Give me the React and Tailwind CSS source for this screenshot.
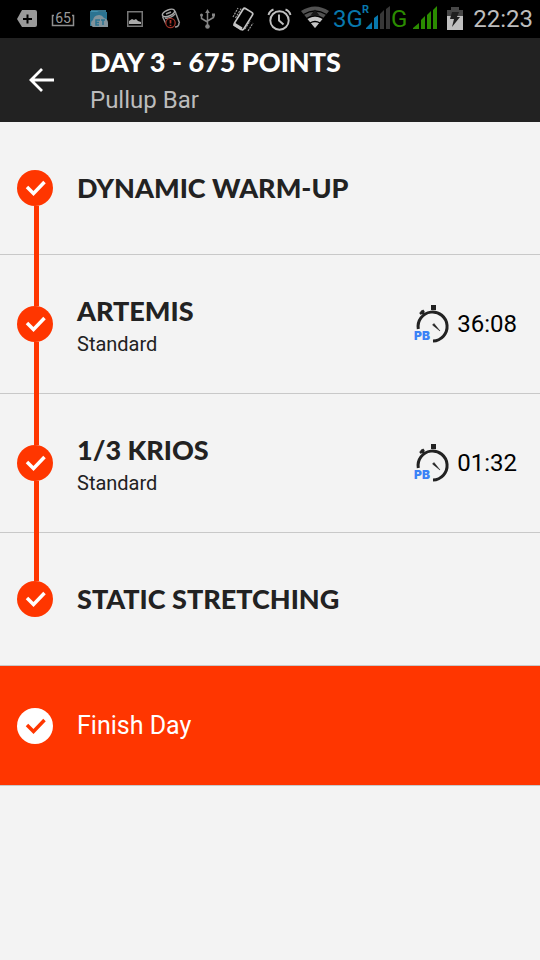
import React from 'react';

const workouts = [
    { title: 'Dynamic Warm-up' },
    { title: 'Artemis', variant: 'Standard', time: '36:08' },
    { title: '1/3 Krios', variant: 'Standard', time: '01:32' },
    { title: 'Static Stretching' },
];

const StatusIcon = ({ children }) => (
    <svg viewBox="0 0 36 38" className="h-[38px] w-9 shrink-0" fill="none" aria-hidden="true">
        {children}
    </svg>
);

const NotificationIcons = () => (
    <div className="flex">
        <StatusIcon>
            <path d="M13 10h13a2 2 0 0 1 2 2v13a2 2 0 0 1-2 2H13l-5-8z" fill="#9a9a9a" />
            <path d="M18.500 14.500v9M14 19h9" stroke="#000" strokeWidth="2" />
        </StatusIcon>
        <StatusIcon>
            <path d="M9 15.500H7.500v10h21v-10H27" stroke="#8f8f8f" strokeWidth="1.500" />
            <text x="18" y="23" textAnchor="middle" fontFamily="Roboto, sans-serif" fontSize="14" fill="#9a9a9a">65</text>
        </StatusIcon>
        <StatusIcon>
            <path d="M9 11h7l2 1h8v14H9z" fill="#2b7391" />
            <path d="M10 11h15" stroke="#4b9bbb" strokeWidth="1.500" />
            <path d="M12 27a4 4 0 0 1 0-7 6 6 0 0 1 11-2q4 1 4 5v4z" fill="#83949c" />
            <path d="M19 20h-4v5h3M15 22.500h3M20 20h4M22 20v5" stroke="#2b7391" strokeWidth="1.500" />
        </StatusIcon>
        <StatusIcon>
            <path d="M10.750 11.750h14.500v14.500h-14.500z" stroke="#777" strokeWidth="1.500" />
            <path d="M12 24v-3l3-2 2 1 2-1 2 2 3 1v2z" fill="#aaa" />
        </StatusIcon>
        <StatusIcon>
            <path d="M9.500 16.500 13 24M22 11l4.500 12" stroke="#999" strokeWidth="1.500" />
            <ellipse cx="15.500" cy="13" rx="6.500" ry="3" transform="rotate(-22 15.500 13)" stroke="#aaa" strokeWidth="1.500" />
            <path d="m13 14 5-2M12 18q5 1 10-4M22 27q4 0 4-4" stroke="#999" strokeWidth="1.500" />
            <circle cx="17.500" cy="23" r="4.700" fill="#000" stroke="#9c3026" strokeWidth="1.300" />
            <path d="M17.500 20v3.500M17.500 24.700v1.300" stroke="#b03529" strokeWidth="1.700" />
        </StatusIcon>
        <StatusIcon>
            <path d="M18.500 11v15M12.500 15v3.500l6 3.500M24.500 15v2.500l-6 3.500" stroke="#858585" strokeWidth="1.500" />
            <circle cx="18.500" cy="26.500" r="2.300" fill="#858585" />
            <path d="m18.500 9 2.300 4h-4.600z" fill="#858585" />
            <circle cx="12.500" cy="15" r="1.500" fill="#858585" />
            <path d="M23 13.500h3v3h-3z" fill="#858585" />
        </StatusIcon>
        <StatusIcon>
            <rect x="13" y="9" width="11" height="20" rx="2" transform="rotate(32 18.500 19)" stroke="#c4c4c4" strokeWidth="1.700" />
            <path d="m9.500 22.500 8 5-1.500 3-8-5z" fill="#c4c4c4" />
            <path d="m8 17 5-9M10.500 18l6-10M20 29l5-8M23 31l5-8" stroke="#9a9a9a" strokeWidth="1.200" strokeDasharray="2 1" />
        </StatusIcon>
        <StatusIcon>
            <circle cx="18.500" cy="20.500" r="9.200" stroke="#c0c0c0" strokeWidth="1.900" />
            <path d="M18 14.500v6l4.500 4M7.500 15q1-4 5-5.500M29.500 15q-1-4-5-5.500" stroke="#c0c0c0" strokeWidth="1.900" />
        </StatusIcon>
        <StatusIcon>
            <path d="M4 11q14-9 28 0L18 28z" fill="#525252" />
            <path d="M10.500 19q7.500-5 15 0L18 28z" fill="#c5c5c5" />
            <path d="M6.500 14.500q11.500-7 23 0M9.500 18.500q8.500-5.500 17 0M13 23q5-3 10 0" stroke="#000" strokeWidth="1.300" />
            <path d="m18 9.500 4.500 6h-9z" fill="#171717" />
        </StatusIcon>
    </div>
);

const StatusBar = () => (
    <div className="flex h-[38px] items-center bg-black pr-[7px] pl-[9px]">
        <NotificationIcons />
        <span className="w-[29px] text-2xl leading-9 text-[#0878ad]">3G</span>
        <svg viewBox="0 0 29 38" className="h-[38px] w-[29px] shrink-0" aria-label="Roaming signal">
            <text x="0" y="13" fontFamily="Roboto, sans-serif" fontWeight="700" fontSize="11" fill="#0878ad">R</text>
            <path d="M4 29v-1l6-6v7zM12 29V18l4-3v14z" fill="#0878ad" />
            <path d="M18 29V14l4-4v19zM24 29V9l4-3v23z" fill="#373737" />
        </svg>
        <span className="w-5 text-2xl leading-9 text-[#2b8c00]">G</span>
        <svg viewBox="0 0 28 38" className="h-[38px] w-7 shrink-0" aria-label="Signal">
            <path d="M2 29v-1l6-5v6zM10 29v-9l4-4v13zM16 29V15l4-4v18zM22 29V10l4-4v23z" fill="#2b8c00" />
        </svg>
        <svg viewBox="0 0 16 38" className="ml-2 h-[38px] w-4 shrink-0" aria-label="Battery charging">
            <path d="M4 7h8v3h4v20H0V10h4z" fill="#474747" />
            <path d="M0 16h16v14H0z" fill="#c0c0c0" />
            <path d="M5 12h7l-2 5h3L5 27l2-8H3z" fill="#202020" />
        </svg>
        <span className="ml-auto text-2xl leading-9 text-[#bdbdbd]">22:23</span>
    </div>
);

const CheckBadge = ({ inverted = false }) => (
    <svg viewBox="0 0 36 36" className="size-9 shrink-0" fill="none" aria-hidden="true">
        <circle cx="18" cy="18" r="18" fill={inverted ? '#fff' : '#ff3600'} />
        <path d="m10 17 6.500 6.500 11-11.500" stroke={inverted ? '#ff3600' : '#fff'} strokeWidth="3.500" />
    </svg>
);

const PersonalBestIcon = () => (
    <svg viewBox="0 0 38 40" className="h-10 w-[38px] shrink-0" fill="none" aria-label="Personal best">
        <path d="M4.300 25A14.500 14.500 0 1 1 19 37" stroke="#222" strokeWidth="3" />
        <path d="M17 1h5v5h-5z" fill="#222" />
        <path d="m7 7 4 4M6 10l4-3.500" stroke="#222" strokeWidth="2.500" />
        <path d="m18.500 21 1.500-1.500 6 7.500z" fill="#222" stroke="#222" strokeWidth=".5" />
        <text x="0" y="36" fontFamily="Inter, sans-serif" fontWeight="900" fontSize="12" fill="#3b82f6">PB</text>
    </svg>
);

const WorkoutRow = ({ workout, isFirst, isLast }) => (
    <li className="flex border-b border-[#c8c8c8] pr-[23px] pl-[17px]">
        {/* the rail runs over the divider so the line stays unbroken between rows */}
        <div className="-mb-px flex w-9 shrink-0 flex-col">
            <div className={`ml-[17px] w-[5px] flex-1 ${isFirst ? '' : 'bg-[#ff3600]'}`} />
            <CheckBadge />
            <div className={`ml-[17px] w-[5px] flex-1 pb-px ${isLast ? '' : 'bg-[#ff3600]'}`} />
        </div>
        <div className={`min-w-0 flex-1 pl-6 ${workout.variant ? 'py-9' : 'py-[46px]'}`}>
            <h2 className="font-[Lato,sans-serif] text-[27px] leading-10 font-black uppercase">{workout.title}</h2>
            {workout.variant && <p className="text-xl leading-[26px]">{workout.variant}</p>}
        </div>
        {workout.time && (
            <div className="flex items-center gap-[5px] text-2xl text-black">
                <PersonalBestIcon />
                <span>{workout.time}</span>
            </div>
        )}
    </li>
);

const App = () => (
    <div className="min-h-screen bg-[#f3f3f3] font-[Roboto,sans-serif] text-[#222]">
        <StatusBar />
        <header className="flex items-center bg-[#222] py-1 pl-[29px] text-white">
            <button type="button" aria-label="Back" className="mr-9 shrink-0">
                <svg viewBox="0 0 25 24" className="h-6 w-[25px]" fill="none" stroke="currentColor" strokeWidth="2.800">
                    <path d="M13 1 2 12l11 11M2 12h23" />
                </svg>
            </button>
            <div>
                <h1 className="font-[Lato,sans-serif] text-[27px] leading-10 font-black uppercase">Day 3 - 675 Points</h1>
                <p className="text-2xl leading-9 text-[#bcbcbc]">Pullup Bar</p>
            </div>
        </header>
        <main>
            <ol>
                {workouts.map((workout, index) => (
                    <WorkoutRow
                        key={workout.title}
                        workout={workout}
                        isFirst={index === 0}
                        isLast={index === workouts.length - 1}
                    />
                ))}
            </ol>
            <button
                type="button"
                className="flex min-h-30 w-full items-center gap-6 border-b border-[#c8c8c8] bg-[#ff3600] pl-[17px] text-[25px] text-white"
            >
                <CheckBadge inverted />
                Finish Day
            </button>
        </main>
    </div>
);

export default App;
